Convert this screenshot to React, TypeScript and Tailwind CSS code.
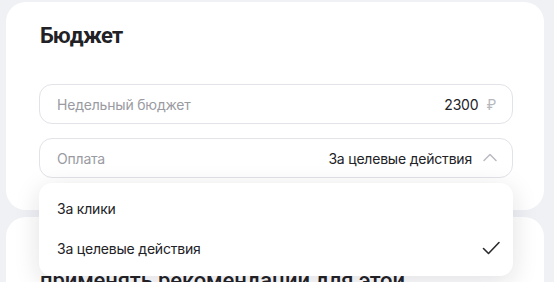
import React from 'react';

function ChevronUp() {
  return (
    <svg className="w-[16px] h-[16px] text-[#b9bbc1]" fill="none" stroke="currentColor" viewBox="0 0 16 16">
      <path strokeLinecap="round" strokeLinejoin="round" strokeWidth={1.5} d="M2 10.5L8 4.5l6 6" />
    </svg>
  );
}

function Check() {
  return (
    <svg className="w-[20px] h-[20px] text-[#2b2b2e]" fill="none" stroke="currentColor" viewBox="0 0 20 20">
      <path strokeLinecap="round" strokeLinejoin="round" strokeWidth={1.6} d="M2.5 10.5l5 5L18 4.5" />
    </svg>
  );
}

export default function App() {
  return (
    <div
      className="w-[554px] h-[282px] overflow-hidden bg-[#f0f1f5] pl-[6px] pr-[10px] pt-[2px] text-[#222226] tracking-[-0.2px]"
      style={{ fontFamily: 'Inter, "Noto Sans", sans-serif' }}
    >
      {/* Budget card */}
      <div className="bg-white rounded-[20px] h-[208px] pl-[33px] pr-[31px] pt-[20px]">
        <h2
          className="pl-[1px] text-[22px] leading-[28px] font-bold tracking-[-0.7px]"
          style={{ fontFamily: 'Roboto, Inter, sans-serif' }}
        >
          Бюджет
        </h2>

        <div className="mt-[34px] h-[40px] rounded-[13px] border border-[#e2e3e8] flex items-center justify-between pl-[17px] pr-[16px] text-[14px]">
          <span className="text-[#9a9ba2]">Недельный бюджет</span>
          <span className="flex items-center gap-[8px]">
            <span>2300</span>
            <span className="text-[#b5b7bd]">₽</span>
          </span>
        </div>

        <div className="relative mt-[14px]">
          <div className="h-[40px] rounded-[13px] border border-[#e2e3e8] flex items-center justify-between pl-[17px] pr-[14px] text-[14px]">
            <span className="text-[#9a9ba2]">Оплата</span>
            <span className="flex items-center gap-[10px]">
              <span>За целевые действия</span>
              <ChevronUp />
            </span>
          </div>

          {/* Dropdown */}
          <div className="absolute left-0 right-0 top-[45px] z-10 bg-white rounded-[13px] shadow-[0_6px_26px_rgba(20,25,50,0.13)] pt-[5px] pb-[8px] text-[14px]">
            <div className="h-[40px] flex items-center pl-[18px]">За клики</div>
            <div className="h-[40px] flex items-center justify-between pl-[18px] pr-[12px]">
              <span>За целевые действия</span>
              <Check />
            </div>
          </div>
        </div>
      </div>

      {/* Next card */}
      <div className="mt-[7px] bg-white rounded-[20px] h-[120px] pl-[34px] pt-[50px]">
        <h2
          className="text-[22px] leading-[28px] font-medium tracking-[-0.1px]"
          style={{ fontFamily: 'Roboto, Inter, sans-serif' }}
        >
          применять рекомендации для этой
        </h2>
      </div>
    </div>
  );
}
